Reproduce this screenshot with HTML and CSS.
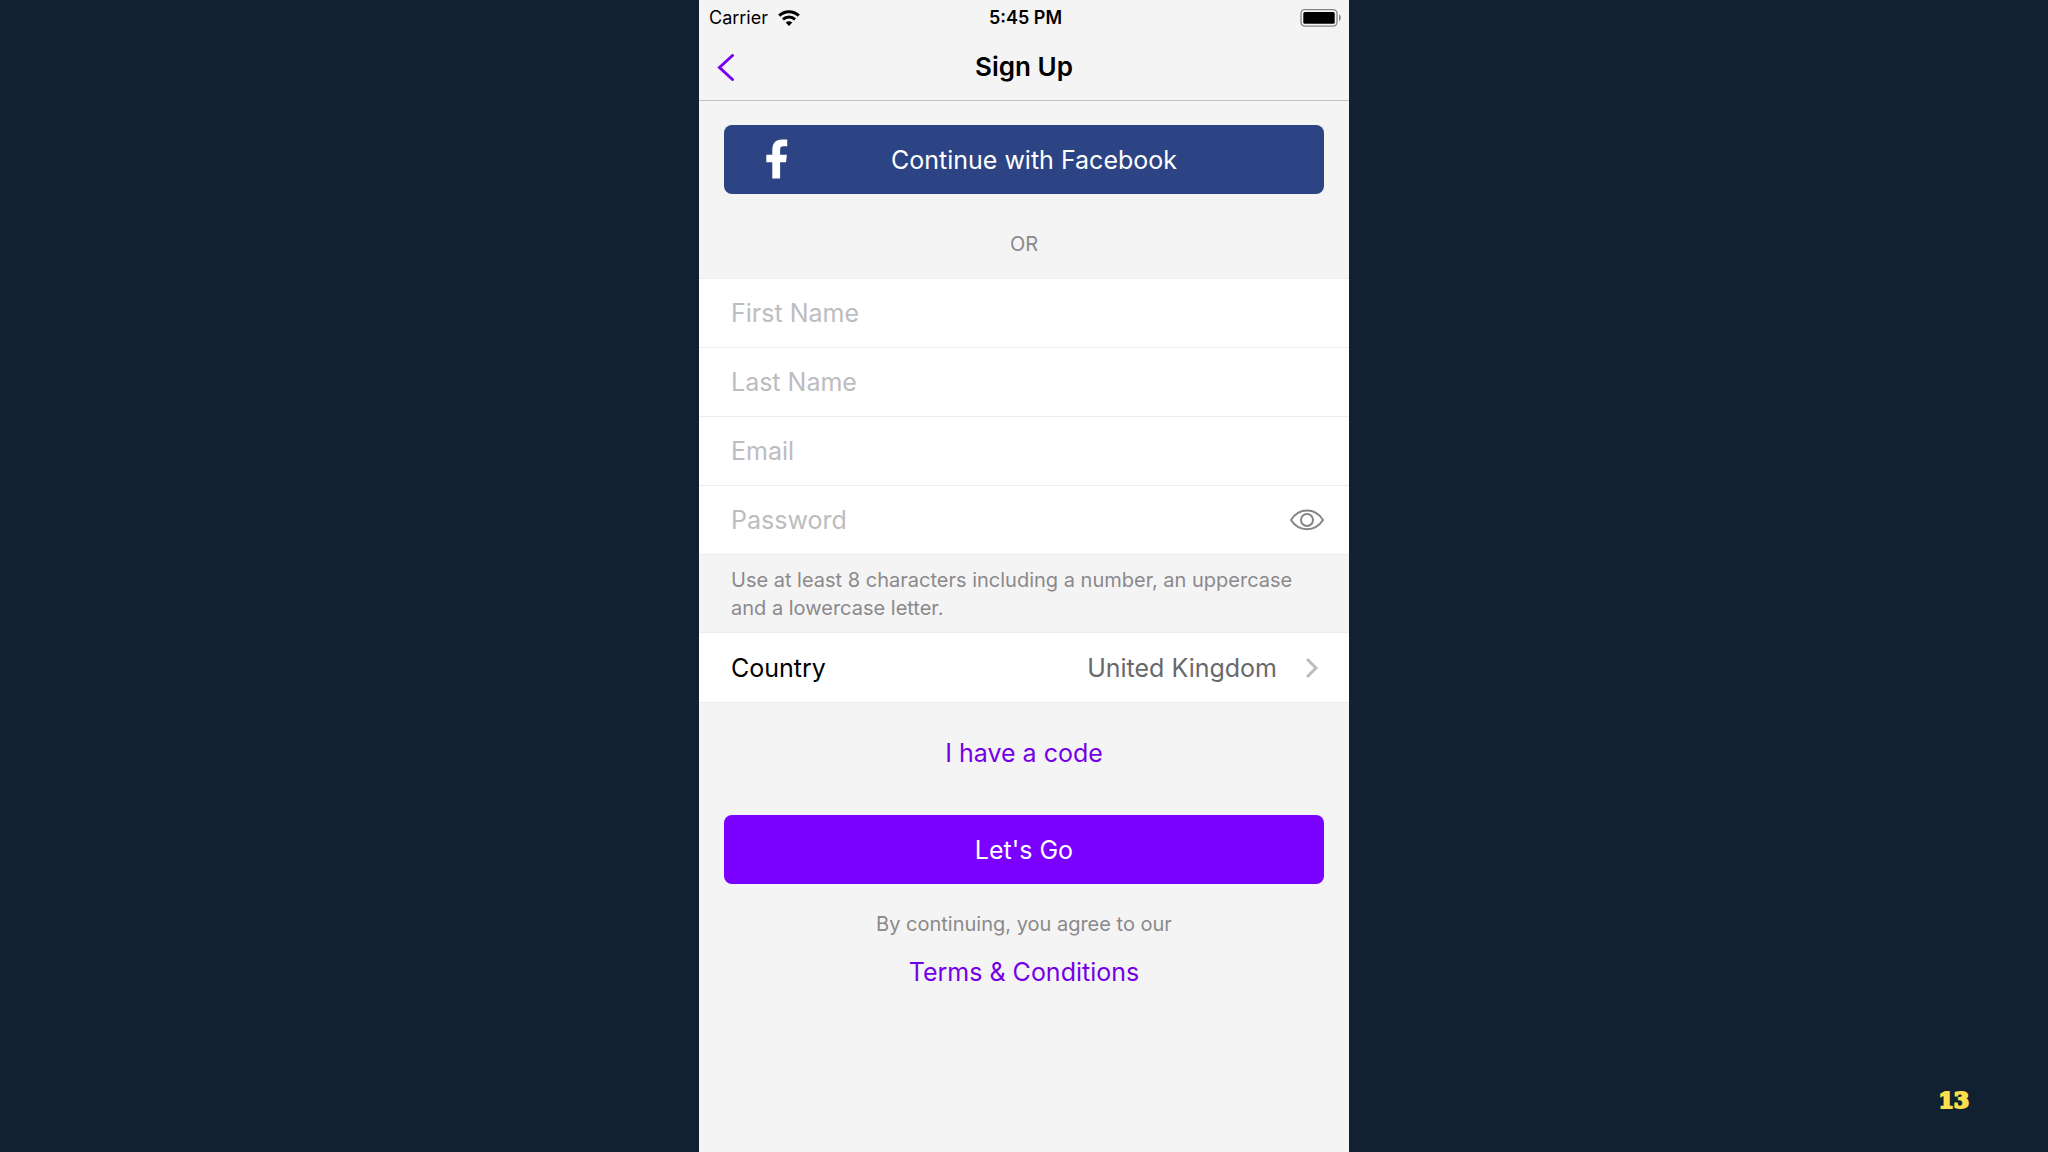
FILE: index.html
```html
<!DOCTYPE html>
<html lang="en">
<head>
<meta charset="utf-8">
<meta name="viewport" content="width=device-width, initial-scale=1">
<title>Sign Up</title>
<link rel="stylesheet" href="styles.css">
</head>
<body>
<div class="slide">
  <main class="phone">
    <div class="status">
      <span class="carrier">Carrier
        <svg class="wifi" viewBox="0 0 22 16" aria-hidden="true">
          <g fill="none" stroke="currentColor" stroke-width="3">
            <path d="M1.2 5.6C6.8.3 15.2.3 20.8 5.6"/>
            <path d="M4.9 9.3c3.5-3.2 8.700-3.200 12.200 0"/>
          </g>
          <path d="M11 15.900 7.700 12.500c1.900-1.700 4.700-1.700 6.600 0z" fill="currentColor"/>
        </svg>
      </span>
      <time class="clock">5:45 PM</time>
      <svg class="battery" viewBox="0 0 42 18" aria-hidden="true">
        <rect x="1" y=".7" width="36" height="16.400" rx="3.800" fill="none" stroke="#858585" stroke-width="1.300"/>
        <rect x="3.300" y="3" width="31.400" height="11.800" rx="1.500"/>
        <path d="M39 5.500c2.400 1.200 2.400 5.300 0 6.500z" fill="#858585"/>
      </svg>
    </div>
    <header class="nav">
      <a class="back" href="#" aria-label="Back">
        <svg viewBox="0 0 18 28" aria-hidden="true"><path d="M15.500 2.500 2.500 14.500l13 12"/></svg>
      </a>
      <h1 class="title">Sign Up</h1>
    </header>
    <form class="signup">
      <div class="block">
        <button class="button facebook" type="button">
          <svg class="fb" viewBox="0 0 22 40" aria-hidden="true"><path d="M6.300 39.500V23.300H.3v-7.600h6V11C6.300 4 9.600.4 16 .4h5.200v6.800h-3.600c-2.700 0-3.500 1-3.500 3.600v4.900h6.800l-.9 7.600h-5.900v16.200z"/></svg>
          Continue with Facebook
        </button>
      </div>
      <p class="note or">OR</p>
      <div class="row"><input class="field" type="text" placeholder="First Name" aria-label="First Name"></div>
      <div class="row"><input class="field" type="text" placeholder="Last Name" aria-label="Last Name"></div>
      <div class="row"><input class="field" type="email" placeholder="Email" aria-label="Email"></div>
      <div class="row">
        <input class="field" type="password" placeholder="Password" aria-label="Password">
        <button class="reveal" type="button" aria-label="Show password">
          <svg viewBox="0 0 34 22" aria-hidden="true"><path d="M1 11C9-1.600 25-1.600 33 11 25 23.300 9 23.300 1 11z"/><circle cx="17" cy="11" r="6"/></svg>
        </button>
      </div>
      <p class="note hint">Use at least 8 characters including a number, an uppercase and a lowercase letter.</p>
      <div class="row country">
        <label for="country">Country</label>
        <select class="picker" id="country"><option>United Kingdom</option></select>
        <svg class="chevron" viewBox="0 0 14 20" aria-hidden="true"><path d="m2 1 9 9-9 9"/></svg>
      </div>
      <a class="link code" href="#">I have a code</a>
      <div class="block"><button class="button go" type="submit">Let's Go</button></div>
      <p class="note agree">By continuing, you agree to our</p>
      <a class="link terms" href="#">Terms &amp; Conditions</a>
    </form>
  </main>
  <span class="page">13</span>
</div>
</body>
</html>
```
FILE: styles.css
```css
* { box-sizing: border-box; }

body {
  margin: 0;
  background: #122131;
  color: #000;
  font-family: Inter, "Liberation Sans", sans-serif;
  font-size: 25px;
  line-height: 32px;
}

h1, p { margin: 0; }
a { text-decoration: none; }
button, input, select { font: inherit; border: 0; padding: 0; background: none; }
svg { display: block; flex: none; }

.slide {
  display: grid;
  grid-template-columns: 1fr minmax(0, 650px) 1fr;
  min-height: 100vh;
}

.phone { grid-column: 2; background: #f5f4f5; }

.status {
  display: grid;
  grid-template-columns: 1fr auto 1fr;
  align-items: center;
  height: 32px;
  padding: 2px 7px 0 10px;
  font-size: 18px;
}
.carrier { display: flex; align-items: center; gap: 10px; }
.wifi { width: 22px; height: 16px; }
.clock { font-weight: 600; }
.battery { width: 42px; height: 18px; justify-self: end; }

.nav {
  display: grid;
  grid-template-columns: 1fr auto 1fr;
  align-items: center;
  height: 69px;
  padding: 2px 18px 0;
  border-bottom: 1px solid #c3c2c4;
}
.back svg {
  width: 18px;
  height: 28px;
  fill: none;
  stroke: #7a00f0;
  stroke-width: 3;
  stroke-linecap: round;
}
.title { font-size: 26px; font-weight: 600; }

.signup { padding-top: 24px; }
.block { padding: 0 25px; }

.button {
  position: relative;
  display: block;
  width: 100%;
  height: 69px;
  border-radius: 8px;
  color: #fff;
}
.facebook { padding-left: 20px; background: #2d4484; }
.go { background: #7a00ff; }
.fb {
  position: absolute;
  top: 14px;
  left: 42px;
  width: 22px;
  height: 40px;
  fill: #fff;
}

.note { color: #8a898c; font-size: 20px; line-height: 28px; }
.or { padding: 36px 0 20px; text-align: center; }
.hint { padding: 11px 32px 10px; border-top: 1px solid #ececee; }
.agree { margin-top: 26px; text-align: center; }

.row {
  display: flex;
  align-items: center;
  height: 69px;
  padding: 0 25px 0 32px;
  border-top: 1px solid #ececee;
  background: #fff;
}
.field { flex: 1; min-width: 0; height: 100%; outline: 0; }
.field::placeholder { color: #bdbcc0; opacity: 1; }
.reveal svg {
  width: 34px;
  height: 22px;
  fill: none;
  stroke: #858488;
  stroke-width: 2;
}

.country { height: 71px; border-bottom: 1px solid #ececee; padding-right: 30px; }
.picker {
  flex: 1;
  appearance: none;
  margin-right: 28px;
  color: #69686c;
  text-align-last: right;
}
.chevron {
  width: 14px;
  height: 20px;
  fill: none;
  stroke: #bdbcc0;
  stroke-width: 3;
}

.link { display: block; width: fit-content; color: #7400e6; }
.code { margin: 34px auto 46px; }
.terms { margin: 18px auto 0; }

.page {
  align-self: end;
  justify-self: end;
  margin: 0 79px 36px 0;
  color: #fbe04e;
  font: bold 22px/32px "DejaVu Serif", serif;
  -webkit-text-stroke: 2px #fbe04e;
}
```
